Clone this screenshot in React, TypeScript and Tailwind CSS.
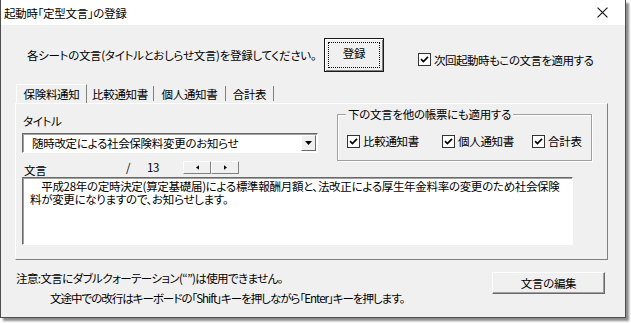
const JP = "font-['Noto_Sans_CJK_JP','Noto_Sans',sans-serif] [font-feature-settings:'palt']";

function CheckBox() {
  return (
    <span className="inline-flex h-[13px] w-[13px] shrink-0 items-center justify-center border border-[#333] bg-white">
      <svg viewBox="0 0 9 9" className="h-[9px] w-[9px]" aria-hidden="true">
        <path d="M1 4.2 L3.4 6.6 L8 1.8" fill="none" stroke="#000" strokeWidth="1.7" />
      </svg>
    </span>
  );
}

function CloseIcon() {
  return (
    <svg viewBox="0 0 10 10" className="h-[11px] w-[11px]" aria-hidden="true">
      <path d="M0.5 0.5 L9.5 9.5 M9.5 0.5 L0.5 9.5" stroke="#111" strokeWidth="1" />
    </svg>
  );
}

function SpinButton({ dir }: { dir: "left" | "right" }) {
  return (
    <span className="flex h-[13px] w-[28px] items-center justify-center border border-l-white border-t-white border-r-[#808080] border-b-[#808080] bg-[#f0f0f0]">
      <svg viewBox="0 0 4 6" className="h-[5px] w-[3px]" aria-hidden="true">
        {dir === "left" ? <path d="M4 0 L0 3 L4 6 Z" fill="#000" /> : <path d="M0 0 L4 3 L0 6 Z" fill="#000" />}
      </svg>
    </span>
  );
}

export default function App() {
  return (
    <div className={`h-[323px] w-[631px] bg-white text-[11.5px] leading-[16px] tracking-[-0.3px] text-black ${JP}`}>
      <div className="flex h-[318px] w-[626px] flex-col border-x border-b border-[#4d4d4d] bg-[#f0f0f0] shadow-[3px_3px_2px_rgba(0,0,0,0.45)]">
        {/* title bar */}
        <div className="flex h-[25px] items-center justify-between bg-white">
          <span className="pl-[3px]">起動時「定型文言」の登録</span>
          <span className="flex h-[25px] w-[46px] items-center justify-center">
            <CloseIcon />
          </span>
        </div>

        {/* header row */}
        <div className="flex h-[47px] items-center pl-[26px] pt-[13px]">
          <span className="w-[297px] whitespace-nowrap">各シートの文言(タイトルとおしらせ文言)を登録してください。</span>
          <button
            type="button"
            className="flex h-[34px] w-[60px] border border-[#1a1a1a] bg-[#f0f0f0] p-[3px] shadow-[inset_1px_1px_0_#fff,inset_-1px_-1px_0_#808080]"
          >
            <span className="flex h-full w-full items-center justify-center border border-dotted border-black pb-[4px]">
              登録
            </span>
          </button>
          <label className="ml-[34px] mt-[9px] flex items-center gap-[3px] tracking-[-0.5px]">
            <CheckBox />
            <span>次回起動時もこの文言を適用する</span>
          </label>
        </div>

        {/* tabs */}
        <div className="ml-[15px] mt-[12px] flex h-[19px] items-stretch">
          <div className="flex w-[71px] items-center justify-center border-l border-t border-r border-l-white border-t-white border-r-[#808080]">
            保険料通知
          </div>
          <div className="flex w-[67px] items-center justify-center">
            <span className="flex h-[15px] w-full items-center justify-center border-r border-[#808080]">比較通知書</span>
          </div>
          <div className="flex w-[72px] items-center justify-center">
            <span className="flex h-[15px] w-full items-center justify-center border-r border-[#808080]">個人通知書</span>
          </div>
          <div className="flex w-[48px] items-center justify-center">
            <span className="flex h-[15px] w-full items-center justify-center border-r border-[#808080]">合計表</span>
          </div>
        </div>

        {/* tab panel */}
        <div className="ml-[14px] flex h-[157px] w-[593px] flex-col border border-l-white border-t-white border-r-[#808080] border-b-[#808080] pl-[6px] pt-[8px]">
          <div className="flex items-start">
            <div className="flex w-[296px] flex-col">
              <span className="h-[18px] pl-[1px] leading-[18px]">タイトル</span>
              <div className="mt-[3px] flex h-[20px] items-center border border-l-[#696969] border-t-[#696969] border-r-white border-b-white bg-white shadow-[inset_1px_1px_0_#a0a0a0]">
                <span className="flex-1 pl-[9px]">随時改定による社会保険料変更のお知らせ</span>
                <span className="mr-[1px] flex h-[16px] w-[15px] items-center justify-center border border-l-white border-t-white border-r-[#696969] border-b-[#696969] bg-[#f0f0f0]">
                  <svg viewBox="0 0 7 4" className="h-[4px] w-[7px]" aria-hidden="true">
                    <path d="M0 0 L7 0 L3.5 4 Z" fill="#000" />
                  </svg>
                </span>
              </div>

              <div className="flex h-[24px] items-center pt-[4px] leading-[12px]">
                <span className="mt-[6px] w-[104px] pl-[2px]">文言</span>
                <span className="w-[21px]">/</span>
                <span className="w-[36px]">13</span>
                <div className="flex">
                  <SpinButton dir="left" />
                  <SpinButton dir="right" />
                </div>
              </div>
            </div>

            <div className="ml-[19px] mt-[2px] h-[47px] w-[255px] border border-[#a0a0a0] shadow-[inset_1px_1px_0_#fff,1px_1px_0_#fff]">
              <div className="-mt-[9px] ml-[8px] w-fit bg-[#f0f0f0] px-[2px] leading-[16px]">
                下の文言を他の帳票にも適用する
              </div>
              <div className="mt-[11px] flex items-center pl-[9px]">
                <label className="flex w-[95px] items-center gap-[3px]">
                  <CheckBox />
                  <span>比較通知書</span>
                </label>
                <label className="flex w-[90px] items-center gap-[3px]">
                  <CheckBox />
                  <span>個人通知書</span>
                </label>
                <label className="flex items-center gap-[3px]">
                  <CheckBox />
                  <span>合計表</span>
                </label>
              </div>
            </div>
          </div>

          <div className="h-[68px] w-[551px] border border-l-[#696969] border-t-[#696969] border-r-white border-b-white bg-white pl-[7px] pt-[2px] leading-[13px] shadow-[inset_1px_1px_0_#a0a0a0]">
            <div className="whitespace-nowrap">　平成28年の定時決定(算定基礎届)による標準報酬月額と、法改正による厚生年金料率の変更のため社会保険</div>
            <div className="whitespace-nowrap">料が変更になりますので、お知らせします。</div>
          </div>
        </div>

        {/* footer */}
        <div className="flex flex-1 items-start justify-between pt-[8px]">
          <div className="flex flex-col pl-[15px] leading-[20px]">
            <span className="whitespace-nowrap tracking-[-0.6px]">注意:文言にダブルクォーテーション(“”)は使用できません。</span>
            <span className="whitespace-nowrap pl-[34px] tracking-[-1px]">文途中での改行はキーボードの「Shift」キーを押しながら「Enter」キーを押します。</span>
          </div>
          <button
            type="button"
            className="mr-[20px] mt-[4px] flex h-[22px] w-[113px] items-center justify-center border border-l-[#fff] border-t-[#fff] border-r-[#696969] border-b-[#696969] bg-[#f0f0f0] shadow-[inset_-1px_-1px_0_#a0a0a0]"
          >
            文言の編集
          </button>
        </div>
      </div>
    </div>
  );
}
